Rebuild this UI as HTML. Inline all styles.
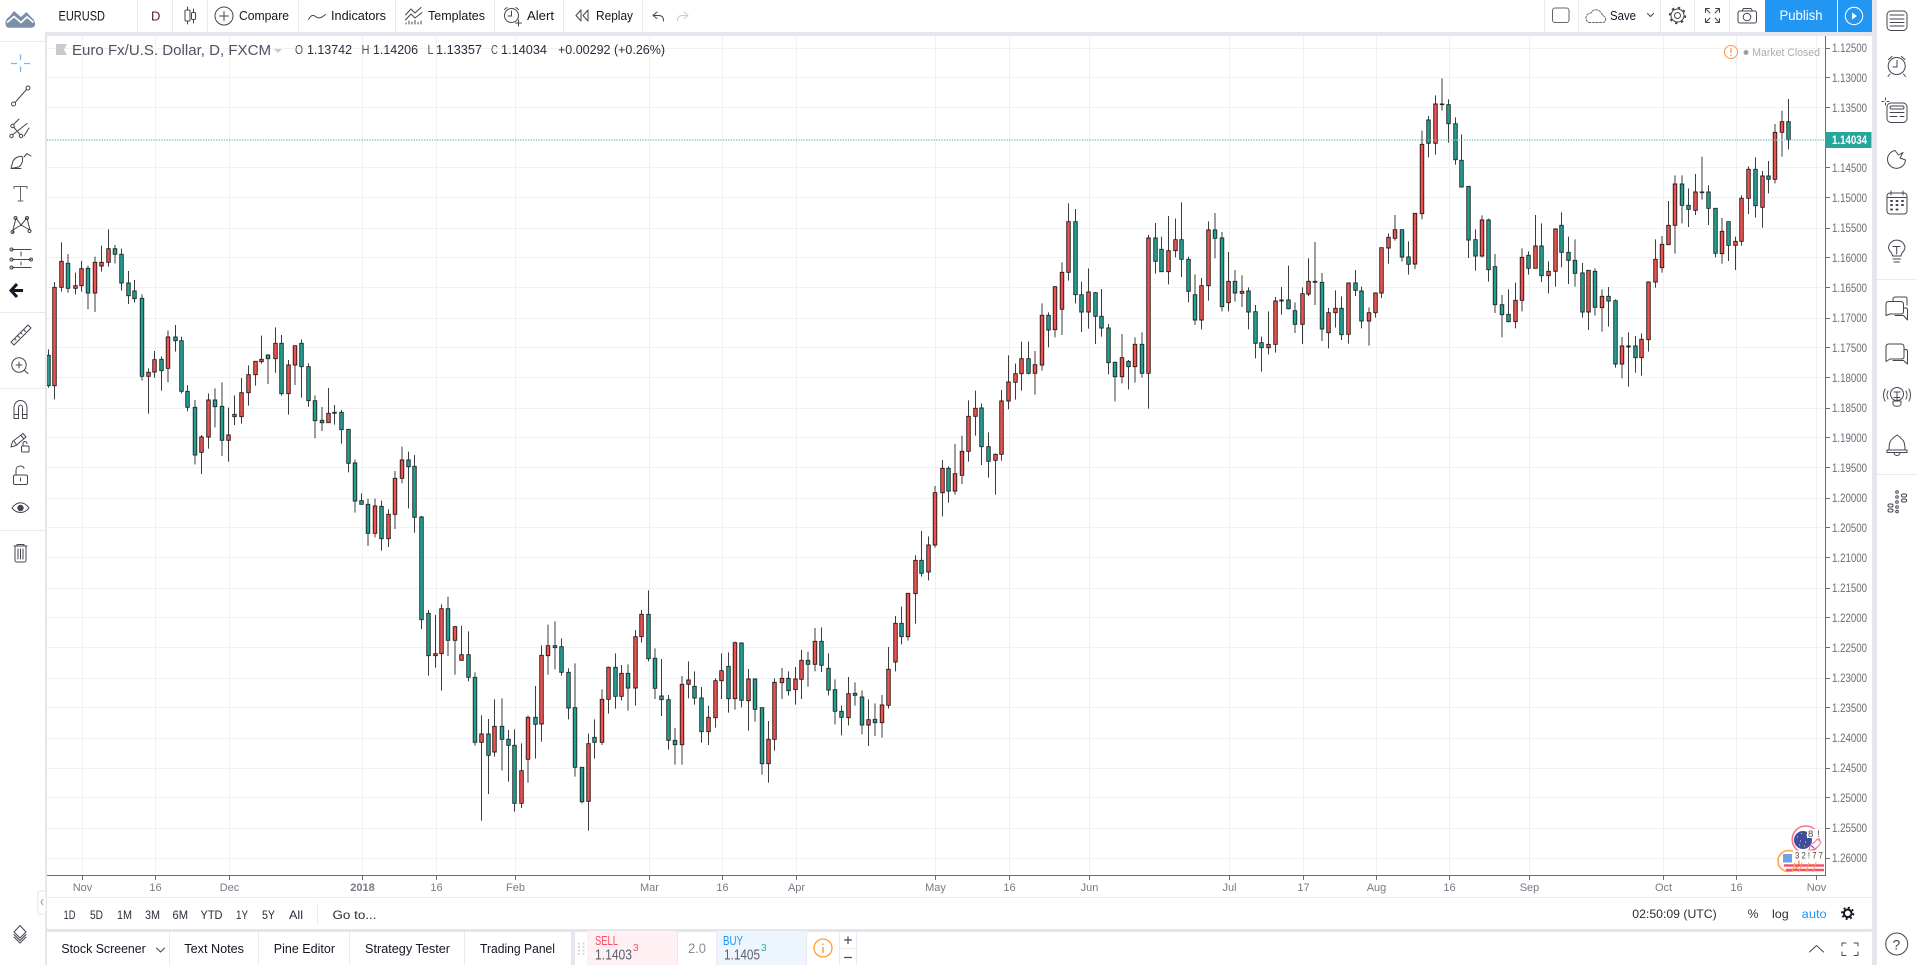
<!DOCTYPE html>
<html><head><meta charset="utf-8"><title>EURUSD</title>
<style>
html,body{margin:0;padding:0;background:#e3e6ec;overflow:hidden}
svg{display:block;position:absolute;left:0;top:0}
text{font-family:"Liberation Sans",sans-serif;fill:#131722}
.t{font-size:13px}
.p{font-size:11.5px;fill:#6a6d78}
.x{font-size:11px;fill:#787b86;text-anchor:middle}
.l{font-size:12.5px;fill:#50535e}
.r{font-size:12px;fill:#2a2e39}
.i{fill:none;stroke:#434651;stroke-width:1;stroke-linecap:round;stroke-linejoin:round}
</style></head><body>
<svg id="s" width="1917" height="965" viewBox="0 0 1917 965" xmlns="http://www.w3.org/2000/svg">
<defs><clipPath id="cc"><rect x="47" y="36" width="1778" height="839"/></clipPath><clipPath id="fc"><rect x="1760" y="820" width="64" height="55"/></clipPath></defs>
<rect width="1917" height="965" fill="#e3e6ec"/>
<!-- panels -->
<rect x="0" y="0" width="45" height="965" fill="#fff"/>
<rect x="1877" y="0" width="40" height="965" fill="#fff"/>
<rect x="0" y="0" width="1872" height="32" fill="#fff"/>
<rect x="45" y="0" width="2" height="32" fill="#fff"/>
<rect x="47" y="36" width="1825" height="893" rx="2" fill="#fff"/>
<rect x="47" y="932" width="1825" height="33" fill="#fff"/>
<!-- toolbar separators -->
<path d="M137.5 0V32M172.5 0V32M207.5 0V32M298.5 0V32M395.5 0V32M494.5 0V32M563.5 0V32M642.5 0V32M1544.5 0V32M1578.5 0V32M1660.5 0V32M1694.5 0V32M1729.5 0V32" stroke="#e8eaee"/>
<path d="M0 41.5H45M0 312.5H45M0 388.5H45M0 530.5H45M1877 279.5H1917M1877 474.5H1917" stroke="#e8eaee"/>
<!-- grid -->
<path stroke="#eff1f4" fill="none" d="M47 48.5H1825M47 77.5H1825M47 107.5H1825M47 167.5H1825M47 197.5H1825M47 228.5H1825M47 257.5H1825M47 287.5H1825M47 318.5H1825M47 347.5H1825M47 377.5H1825M47 408.5H1825M47 437.5H1825M47 467.5H1825M47 498.5H1825M47 527.5H1825M47 557.5H1825M47 588.5H1825M47 617.5H1825M47 647.5H1825M47 678.5H1825M47 707.5H1825M47 738.5H1825M47 768.5H1825M47 797.5H1825M47 828.5H1825M47 858.5H1825"/>
<path stroke="#eff1f4" fill="none" d="M82.5 36V875M155.5 36V875M229.5 36V875M362.5 36V875M436.5 36V875M515.5 36V875M649.5 36V875M722.5 36V875M796.5 36V875M935.5 36V875M1009.5 36V875M1089.5 36V875M1229.5 36V875M1303.5 36V875M1376.5 36V875M1449.5 36V875M1529.5 36V875M1663.5 36V875M1736.5 36V875M1816.5 36V875"/>
<g id="candles" clip-path="url(#cc)"></g>
<path d="M47 140H1825" stroke="#62c6ba" stroke-width="1.3" stroke-dasharray="1.300 1.300"/>
<!-- axes -->
<path d="M1825.5 36V875.5M47 875.5H1826" stroke="#6a6d78" fill="none"/>
<path stroke="#6a6d78" fill="none" d="M1826 48.5h4M1826 77.5h4M1826 107.5h4M1826 167.5h4M1826 197.5h4M1826 228.5h4M1826 257.5h4M1826 287.5h4M1826 318.5h4M1826 347.5h4M1826 377.5h4M1826 408.5h4M1826 437.5h4M1826 467.5h4M1826 498.5h4M1826 527.5h4M1826 557.5h4M1826 588.5h4M1826 617.5h4M1826 647.5h4M1826 678.5h4M1826 707.5h4M1826 738.5h4M1826 768.5h4M1826 797.5h4M1826 828.5h4M1826 858.5h4"/>
<path stroke="#6a6d78" fill="none" d="M82.5 876v4M155.5 876v4M229.5 876v4M362.5 876v4M436.5 876v4M515.5 876v4M649.5 876v4M722.5 876v4M796.5 876v4M935.5 876v4M1009.5 876v4M1089.5 876v4M1229.5 876v4M1303.5 876v4M1376.5 876v4M1449.5 876v4M1529.5 876v4M1663.5 876v4M1736.5 876v4M1816.5 876v4"/>
<path d="M47 897.5H1872" stroke="#e8eaee"/>
<!-- price labels -->
<g class="pl">
<text class="p" x="1832" y="52" textLength="35">1.12500</text>
<text class="p" x="1832" y="82" textLength="35">1.13000</text>
<text class="p" x="1832" y="112" textLength="35">1.13500</text>
<text class="p" x="1832" y="172" textLength="35">1.14500</text>
<text class="p" x="1832" y="202" textLength="35">1.15000</text>
<text class="p" x="1832" y="232" textLength="35">1.15500</text>
<text class="p" x="1832" y="262" textLength="35">1.16000</text>
<text class="p" x="1832" y="292" textLength="35">1.16500</text>
<text class="p" x="1832" y="322" textLength="35">1.17000</text>
<text class="p" x="1832" y="352" textLength="35">1.17500</text>
<text class="p" x="1832" y="382" textLength="35">1.18000</text>
<text class="p" x="1832" y="412" textLength="35">1.18500</text>
<text class="p" x="1832" y="442" textLength="35">1.19000</text>
<text class="p" x="1832" y="472" textLength="35">1.19500</text>
<text class="p" x="1832" y="502" textLength="35">1.20000</text>
<text class="p" x="1832" y="532" textLength="35">1.20500</text>
<text class="p" x="1832" y="562" textLength="35">1.21000</text>
<text class="p" x="1832" y="592" textLength="35">1.21500</text>
<text class="p" x="1832" y="622" textLength="35">1.22000</text>
<text class="p" x="1832" y="652" textLength="35">1.22500</text>
<text class="p" x="1832" y="682" textLength="35">1.23000</text>
<text class="p" x="1832" y="712" textLength="35">1.23500</text>
<text class="p" x="1832" y="742" textLength="35">1.24000</text>
<text class="p" x="1832" y="772" textLength="35">1.24500</text>
<text class="p" x="1832" y="802" textLength="35">1.25000</text>
<text class="p" x="1832" y="832" textLength="35">1.25500</text>
<text class="p" x="1832" y="862" textLength="35">1.26000</text>
</g>
<rect x="1825" y="132" width="46.5" height="16" fill="#26a69a"/>
<text x="1832" y="144" textLength="35" style="font-size:11.5px;font-weight:bold;fill:#fff">1.14034</text>
<!-- time labels -->
<text class="x" x="82.5" y="891">Nov</text><text class="x" x="155.5" y="891">16</text><text class="x" x="229.5" y="891">Dec</text><text class="x" x="362.5" y="891" style="font-weight:bold">2018</text><text class="x" x="436.5" y="891">16</text><text class="x" x="515.5" y="891">Feb</text><text class="x" x="649.5" y="891">Mar</text><text class="x" x="722.5" y="891">16</text><text class="x" x="796.5" y="891">Apr</text><text class="x" x="935.5" y="891">May</text><text class="x" x="1009.5" y="891">16</text><text class="x" x="1089.5" y="891">Jun</text><text class="x" x="1229.5" y="891">Jul</text><text class="x" x="1303.5" y="891">17</text><text class="x" x="1376.5" y="891">Aug</text><text class="x" x="1449.5" y="891">16</text><text class="x" x="1529.5" y="891">Sep</text><text class="x" x="1663.5" y="891">Oct</text><text class="x" x="1736.5" y="891">16</text><text class="x" x="1816.5" y="891">Nov</text>
<!-- top toolbar text -->
<text class="t" x="58.5" y="20.500" textLength="46.5" style="font-size:13.500px">EURUSD</text>
<text class="t" x="151" y="20.500" style="font-size:13px;fill:#5b1a3c">D</text>
<text class="t" x="239" y="20" textLength="50">Compare</text>
<text class="t" x="331" y="20" textLength="55">Indicators</text>
<text class="t" x="428" y="20" textLength="57">Templates</text>
<text class="t" x="527" y="20" textLength="27">Alert</text>
<text class="t" x="596" y="20" textLength="37">Replay</text>
<text class="t" x="1610" y="20" textLength="26">Save</text>
<rect x="1765" y="0" width="107" height="32" fill="#2196f3"/>
<path d="M1837.5 0V32" stroke="#fff"/>
<text x="1779.5" y="20" textLength="43" style="font-size:14px;fill:#fff">Publish</text>
<circle cx="1854" cy="16" r="8.7" fill="none" stroke="#fff" stroke-width="1.1"/><path d="M1852 12.5l5 3.5-5 3.5z" fill="#fff"/>
<!-- top toolbar icons -->
<g class="i">
<path d="M187.5 7V24M193.5 9V23"/><rect x="185" y="10" width="5" height="11" rx="1" fill="#fff"/><rect x="191.5" y="12.5" width="4" height="7" rx="1" fill="#fff"/>
<circle cx="224" cy="16" r="9"/><path d="M224 11.5V20.5M219.5 16H228.5"/>
<path d="M308.5 19.5C311 15 313 14.5 315.5 16.5S320 19 325.5 14.5"/>
<path d="M405.5 15L411 9L415 13L421 7.5M405.5 20L411 14L415 18L422 12.5M406 24v-1M409 24v-3M412 24v-2M415 24v-3.500M418 24v-1.500M421 24v-3"/>
<circle cx="511.500" cy="15.500" r="7"/><path d="M511.500 11V16H508M504.500 9.500L507 7.500M516 7.500L518.500 9.500M518.500 20V26M515.500 23H521.500"/>
<path d="M581 10L576 15.500L581 21ZM588 10L583 15.500L588 21Z"/>
<path d="M657 12L653 15.500L657 18.500M653 15.500H659C662 15.500 663.500 17.500 663.500 21"/>
<path d="M684 12L688 15.500L684 18.500M688 15.500H682C679 15.500 677.500 17.500 677.500 21" stroke="#c9cbd1"/>
<rect x="1552.500" y="8" width="16.500" height="14.500" rx="2.500" stroke="#666"/>
<path d="M1589 22.500H1603C1606.500 22.500 1606.500 16 1602.500 15.500C1601 10 1594 7 1591 13C1586 13 1583.500 20 1589 22.500Z" stroke-dasharray="2 1.500" stroke="#666"/>
<path d="M1647.500 13.500L1650.500 16.500L1653.500 13.500"/>
<circle cx="1677.500" cy="15.500" r="3"/><circle cx="1677.500" cy="15.500" r="6.500"/><circle cx="1677.500" cy="15.500" r="7.800" stroke-width="1.800" stroke-dasharray="2.400 3.720" stroke-linecap="butt"/>
<path d="M1705.500 12.500V8.500H1709.500M1715.500 8.500H1719.500V12.500M1719.500 18.500V22.500H1715.500M1709.500 22.500H1705.500V18.500M1706 9L1710 13M1719 9L1715 13M1719 22L1715 18M1706 22L1710 18"/>
<rect x="1738" y="11" width="18.500" height="12" rx="2"/><path d="M1742 11L1743.500 8.500H1751L1752.500 11"/><circle cx="1747" cy="17" r="3.800"/>
</g>
<!-- legend -->
<path d="M56 44H67L64 49.500L67 55H56Z" fill="#c5cbce"/>
<text x="72" y="55" textLength="199" style="font-size:14.500px;fill:#50535e">Euro Fx/U.S. Dollar, D, FXCM</text>
<path d="M274 49H282L278 53Z" fill="#c5cbce"/>
<text class="l" x="295" y="54" textLength="8">O</text><text class="l" x="307" y="54" textLength="45" style="fill:#2a2e39">1.13742</text>
<text class="l" x="361.500" y="54" textLength="8">H</text><text class="l" x="373" y="54" textLength="45" style="fill:#2a2e39">1.14206</text>
<text class="l" x="427.500" y="54" textLength="6">L</text><text class="l" x="436" y="54" textLength="46" style="fill:#2a2e39">1.13357</text>
<text class="l" x="491" y="54" textLength="7">C</text><text class="l" x="501" y="54" textLength="46" style="fill:#2a2e39">1.14034</text>
<text class="l" x="558" y="54" textLength="107" style="fill:#2a2e39">+0.00292 (+0.26%)</text>
<circle cx="1731" cy="52" r="6.500" fill="#fff" stroke="#ff9850" stroke-width="1.100"/><path d="M1731 48V53M1731 54.500V56" stroke="#ff9850" stroke-width="1.300"/>
<circle cx="1746" cy="52.500" r="2.500" fill="#9a9da5"/>
<text x="1752.300" y="56" textLength="67.700" style="font-size:11px;fill:#a8abb2">Market Closed</text>
<!-- flags -->
<g clip-path="url(#fc)">
<circle cx="1805.700" cy="839.500" r="13.500" fill="#fff" stroke="#ff7089" stroke-width="1.600"/>
<circle cx="1803" cy="840" r="9" fill="#3e4d9e"/>
<path d="M1797 837h1M1801 833.500h1M1806 835h1M1800 841h1M1805 842h1M1799 845h1M1804 846h1" stroke="#d8c44a" stroke-width="1.200"/>
<path d="M1811 844a9 9 0 0 0 6-5l4 3a13 13 0 0 1-12 8z" fill="#fff" stroke="#ff7089"/>
<path d="M1811 845.500L1814 848" stroke="#3e4d9e"/>
<rect x="1807" y="829" width="19" height="9" fill="#fff"/>
<circle cx="1788.500" cy="861" r="10.500" fill="#fff" stroke="#ffa63f" stroke-width="1.600"/>
<rect x="1783" y="854" width="9" height="8.500" fill="#6fa2e4"/>
<path d="M1784 865.500H1824M1786 870H1824" stroke="#f4536e" stroke-width="2.500"/>
<path d="M1795 862.500L1792 872M1802 862.500L1799 872M1809 862.500L1806 872M1816 862.500L1813 872" stroke="#ffa63f" fill="none"/>
<rect x="1793" y="850.500" width="32" height="10" fill="#fff"/>
<text x="1808" y="837" style="font-size:9.500px;fill:#444">8</text><text x="1817" y="837" style="font-size:9.500px;fill:#444">!</text>
<text x="1795" y="858.500" textLength="28" style="font-size:9.500px;fill:#444">3 2 ! 7 7</text>
</g>
<!-- range bar -->
<g class="r">
<text class="r" x="63.500" y="919" textLength="12">1D</text>
<text class="r" x="90" y="919" textLength="13">5D</text>
<text class="r" x="117" y="919" textLength="15">1M</text>
<text class="r" x="145" y="919" textLength="15">3M</text>
<text class="r" x="172.500" y="919" textLength="15.500">6M</text>
<text class="r" x="200.500" y="919" textLength="22">YTD</text>
<text class="r" x="236" y="919" textLength="12">1Y</text>
<text class="r" x="262" y="919" textLength="13">5Y</text>
<text class="r" x="289" y="919" textLength="14">All</text>
<text class="r" x="332.500" y="919" textLength="44">Go to...</text>
</g>
<path d="M317.500 903V925" stroke="#e8eaee"/>
<text class="r" x="1632.300" y="918" textLength="84.400">02:50:09 (UTC)</text>
<text class="r" x="1747.700" y="918" textLength="10.600">%</text>
<text class="r" x="1772" y="918" textLength="16.700">log</text>
<text class="r" x="1801.700" y="918" textLength="25" style="fill:#2196f3">auto</text>
<circle cx="1847.700" cy="913.300" r="3.800" fill="none" stroke="#131722" stroke-width="2"/><circle cx="1847.700" cy="913.300" r="5.700" fill="none" stroke="#131722" stroke-width="1.800" stroke-dasharray="2 2.470"/>
<path d="M38 914V893a2 2 0 0 1 2-2H46V914Z" fill="#fff" stroke="#e3e6ec"/><path d="M43 899L41 902L43 905" fill="none" stroke="#9598a1"/>
<!-- bottom tabs -->
<text class="t" x="61.400" y="953" textLength="84.400" style="font-size:12.500px">Stock Screener</text>
<path d="M156.500 948L160.500 952L164.500 948" class="i"/>
<text class="t" x="184.300" y="953" textLength="59.700" style="font-size:12.500px">Text Notes</text>
<text class="t" x="273.800" y="953" textLength="61.200" style="font-size:12.500px">Pine Editor</text>
<text class="t" x="365" y="953" textLength="85" style="font-size:12.500px">Strategy Tester</text>
<text class="t" x="480" y="953" textLength="75" style="font-size:12.500px">Trading Panel</text>
<path d="M169.500 932V965M258.500 932V965M349.500 932V965M464.500 932V965" stroke="#e8eaee"/>
<rect x="571" y="932" width="4" height="33" fill="#e3e6ec"/>
<rect x="587" y="931" width="90.500" height="34" fill="#fff0f3"/>
<rect x="716.500" y="931" width="90" height="34" fill="#edf6ff"/>
<path d="M677.500 931V965M716.500 931V965M806.500 931V965M839.500 931V965M856.500 931V965M840 948.500H856" stroke="#e8eaee"/>
<path d="M578 943.500h2M582.500 943.500h2M578 947h2M582.500 947h2M578 950.500h2M582.500 950.500h2M578 954h2M582.500 954h2" stroke="#d5d8de" stroke-width="2"/>
<text x="595" y="945" textLength="23" style="font-size:12.500px;fill:#ff4a68">SELL</text>
<text x="595" y="959.500" textLength="37" style="font-size:14.500px;fill:#5d606b">1.1403</text>
<text x="633" y="951" style="font-size:10px;fill:#ff4a68">3</text>
<text x="688" y="953" textLength="18" style="font-size:14px;fill:#8a8d96">2.0</text>
<text x="723" y="945" textLength="20" style="font-size:12.500px;fill:#2196f3">BUY</text>
<text x="724" y="959.500" textLength="36" style="font-size:14.500px;fill:#5d606b">1.1405</text>
<text x="761" y="951" style="font-size:10px;fill:#1fb58f">3</text>
<circle cx="823" cy="948" r="9" fill="none" stroke="#ff9d2e" stroke-width="1.300"/><path d="M823 947V953M823 943.500V945" stroke="#ff9d2e" stroke-width="1.500"/>
<path d="M848 936.500V944M844.200 940H851.800M844.200 957.500H851.800" stroke="#434651" stroke-width="1.200"/>
<path d="M1809.500 952L1816.500 945.500L1823.500 952" class="i" stroke-width="1"/>
<path d="M1842 946V943H1846M1854 943H1858V946M1858 952V955.500H1854M1846 955.500H1842V952" class="i"/>
<!-- left toolbar icons -->
<path d="M5.500 24C5 20 8 17.500 10 16L14 11L21 17L26.500 12L31 17C34 19 35.500 22.500 35 25C34.500 27 33 27.700 31 27.700H9C7 27.700 6 26.500 5.500 24Z" fill="#7a90a8"/>
<path d="M7 22.500L14 16.500L21 22.500L27 17L33.500 22.500" fill="none" stroke="#fff" stroke-width="1.600"/>
<path d="M20.500 54.500V60M20.500 66.500V72M11 63.500H17M24 63.500H30" stroke="#74b8f5" stroke-width="1.300"/>
<g class="i">
<circle cx="13.500" cy="104" r="2"/><circle cx="28" cy="88" r="2"/><path d="M15 102.500L26.500 89.500"/>
<circle cx="12.500" cy="126" r="1.700"/><circle cx="11.500" cy="136" r="1.700"/><circle cx="21" cy="136" r="1.700"/><path d="M19 119L13.500 124.500M14 127.500L20 134.500M13 134.500L27 123.500M29 128L24 136"/>
<path d="M11 168.500L13 161C15 157.500 19 156 22 156.500C23.500 160 22 165 18.500 167L11 168.500M11 168.500H21M24 157L27 153.500L31 156"/>
<path d="M14 186.500H27M20.500 186.500V201M18 201H23M14 186.500V188.500M27 186.500V188.500" stroke="#666"/>
<path d="M16 218L13 230M16 218L21 225L27 218M27 218L30 230M13 230L21 225L30 230M13 230V233" /><circle cx="15.500" cy="218" r="1.500"/><circle cx="27" cy="218" r="1.500"/><circle cx="12.500" cy="232" r="1.500"/><circle cx="29.500" cy="231" r="1.500"/>
<path d="M12 249.500H31"/><circle cx="11.500" cy="249.500" r="1.500"/><path d="M12 259.500H31M12 267.500H31M21 252V256M21 262V265"/><circle cx="11.500" cy="259.500" r="1.500"/><circle cx="31" cy="259.500" r="1.500"/><circle cx="11.500" cy="267.500" r="1.500"/>
<path d="M11 342L28 325L31 328L14 345ZM14.500 338.500L16 340M17.500 335.500L19.500 337.500M20.500 332.500L22 334M23.500 329.500L25.500 331.500"/>
<circle cx="19" cy="365" r="7.200"/><path d="M19 362V368M16 365H22M24.500 370.500L28 373.500"/>
<path d="M14 418.500V408C14 398 27 398 27 408V418.500H22.500V408C22.500 404 18.500 404 18.500 408V418.500ZM14 414.500H18.500M22.500 414.500H27"/>
<path d="M11 447L12.500 441.500L23 433.500L26 437L16 445.500ZM14 441L16.500 445M21 435.500L23.500 438.500"/><path d="M23 446V443.500C23 441 27 441 27 443.500"/><rect x="21.500" y="446" width="7.500" height="6" rx="1" fill="#fff"/>
<rect x="13.500" y="475" width="14" height="9.500" rx="1.500"/><path d="M16 475V470C16 465 24 465 24 468.500M20.500 478V481"/>
<path d="M12 508C17 501 24 501 29 508C24 514 17 514 12 508Z"/><circle cx="20.500" cy="508" r="2.700" fill="#434651"/>
<path d="M14 546H27M15 546V560C15 562 16 562 17 562H24C25 562 26 562 26 560V546M18 549V559M20.500 549V559M23 549V559M17 546V544.500H24V546"/>
<path d="M20 925.500L26 932L20 938L14 932ZM14 934.500L20 940.500L26 934.500M14 937L20 943L26 937"/>
</g>
<path d="M11 290.500H23M17 284L11 290.500L17 297" fill="none" stroke="#131722" stroke-width="3"/>
<!-- right toolbar icons -->
<g class="i">
<rect x="1887" y="11" width="20" height="19.500" rx="4"/><path d="M1890 15H1904M1890 19H1904M1890 22.500H1904M1890 26H1904"/>
<circle cx="1896.700" cy="66" r="8.500"/><path d="M1897 60.500V67H1893M1888.500 59.500L1892 56.500M1905 59.500L1901.500 56.500M1890 74L1888 76.500M1903.500 74L1905.500 76.500"/>
<rect x="1887" y="103" width="20" height="19.500" rx="4"/><rect x="1890" y="106" width="14" height="3" rx="1.500"/><path d="M1890 112.500H1904M1890 116.500H1897M1900 116.500H1904M1882 101.500H1884M1887 101.500H1889M1885.500 98V100M1885.500 103V105"/>
<path d="M1895 150.500A9 9 0 1 0 1905.500 160L1900 158L1903 152.500L1898.500 155Z"/>
<rect x="1887" y="193" width="20" height="21" rx="3"/><path d="M1887 197.500H1907M1891 191V195M1903 191V195"/><path d="M1891 201h1M1896.500 201h1M1902 201h1M1891 205h1M1896.500 205h1M1902 205h1M1891 209.500h1M1896.500 209.500h1" stroke-width="2"/>
<path d="M1892.500 256C1892.500 252 1888.500 251.500 1888.500 247.500A8.300 8.300 0 0 1 1905 247.500C1905 251.500 1901 252 1901 256ZM1893 259H1900.500M1894 262H1899.500M1893 246.500H1900M1896.700 247V254"/>
<path d="M1886 315.500V304C1886 302.500 1887 301.500 1888.500 301.500H1901C1902.500 301.500 1903.500 302.500 1903.500 304V312C1903.500 313 1902.500 314 1901 314H1890ZM1893 301.500V299C1893 298 1894 297 1895 297H1905.500C1906.500 297 1907 298 1907 299V305M1903.500 308H1906C1907 308 1907.500 309 1907.500 310V320L1903.500 315.500H1895"/>
<path d="M1886 361.500V347C1886 345 1887 344 1889 344H1901C1903 344 1904 345 1904 347V357C1904 358 1903 359 1901 359H1890ZM1904 349.500H1906C1907 349.500 1907.500 350.500 1907.500 351.500V364L1903.500 360.500H1893"/>
<circle cx="1897" cy="394" r="6.500"/><path d="M1893 401H1901V404C1901 407 1893 407 1893 404ZM1894 397.500H1900M1897 392V401M1894 392H1900"/>
<path d="M1885 389C1883 393 1883 397 1885 401M1888 391C1886.500 394 1886.500 396 1888 399M1909 389C1911 393 1911 397 1909 401M1906 391C1907.500 394 1907.500 396 1906 399"/>
<path d="M1889 450C1889 443 1889.500 440 1897 435C1904.500 440 1905 443 1905 450M1887 450H1907V452.500H1887ZM1894 452.500C1894 456.500 1900 456.500 1900 452.500"/>
<circle cx="1897" cy="492" r="1.300"/><circle cx="1897" cy="497" r="1.300"/><circle cx="1897" cy="502" r="1.300"/><circle cx="1897" cy="507" r="1.300"/><circle cx="1897" cy="511.500" r="1.300"/>
<rect x="1901.500" y="494" width="5" height="3" rx="1.500"/><rect x="1901.500" y="499" width="5" height="3" rx="1.500"/><rect x="1888" y="504" width="5" height="3" rx="1.500"/><rect x="1888" y="509" width="5" height="3" rx="1.500"/>
<circle cx="1896.700" cy="944" r="11"/>
</g>
<text x="1892.500" y="949.500" style="font-size:14px;fill:#434651">?</text>
</svg>
<script>
document.querySelectorAll("text[textLength]").forEach(function(t){t.setAttribute("lengthAdjust","spacingAndGlyphs")});
var S=[
[40,200,"26 448 466 557 563 g,44 246 262 557 598 r,65 127 184 262 275 r,84 162 190 265 278 g,106 218 257 265 283 r,125 183 206 257 275 r,144 197 205 279 328 g,165 170 187 279 336 r,184 137 187 198 215 r,205 88 146 187 200 r,225 135 146 163 190 g,244 146 163 249 272 g,265 213 249 287 312 g,284 240 273 296 307 g,306 283 295 529 542 g,325 505 517 529 641 r,344 453 479 516 533 r,365 469 478 512 572 g,384 391 411 505 547 r,406 375 411 422 455 g,425 410 422 574 580 g,443 556 574 622 634 g,465 600 622 765 793 g,485 705 711 757 822 r,505 580 600 711 746 r,525 565 600 620 682 g,546 547 619 721 768 g,565 623 705 721 785 r,584 586 643 650 675 g,605 534 578 650 671 r,625 496 524 578 617 r,646 484 484 524 557 r,665 407 478 485 491 r,684 463 465 476 552 g,706 382 430 476 518 r,725 405 430 581 587 g,746 480 495 581 644 r,765 437 437 495 555 r,785 418 430 500 593 g,805 490 500 602 620 g,825 586 602 662 715 g,846 621 661 668 693 g,865 564 640 668 668 r,883 615 637 640 674 g,905 630 637 689 731 g,925 688 688 790 817 g"],
[0,300,"1065 478 489 603 638 g,1085 580 602 613 613 g,1104 596 613 700 738 g,1125 596 618 700 712 r,1144 602 619 716 752 g,1165 628 643 716 741 r,1185 513 535 643 687 r"],
[400,450,"6 -10 30 85 100 r,25 5 30 50 175 g,44 15 49 202 248 g,65 198 201 509 537 g,85 480 490 617 677 g,106 495 611 617 653 r,125 463 476 611 722 r,144 440 476 571 618 g,165 528 530 571 674 r,184 527 614 631 631 r,206 544 614 682 694 g,225 667 682 877 887 g,244 796 852 877 1112 r,265 807 852 916 1032 g,284 748 829 906 920 r,306 745 829 868 961 g,325 840 868 886 995 g,344 838 886 1060 1085 g,365 880 962 1060 1074 r,384 797 802 928 998 r,406 708 802 823 926 g,425 586 616 822 875 r,444 524 587 617 674 r,465 514 587 593 658 g,485 565 590 667 677 g,506 655 667 774 808 g,525 640 773 952 980 g,546 952 952 1055 1060 g,565 851 881 1054 1142 r,584 808 862 877 926 g,606 718 748 877 885 r,625 650 652 748 791 r,646 610 652 739 776 g,665 645 670 739 751 r,684 643 670 714 782 g,706 540 560 714 767 r,725 480 493 560 578 r,746 421 493 626 634 g,765 595 625 715 747 g,785 627 738 749 798 g,805 735 749 871 899 g,825 834 871 884 944 g,846 678 703 884 944 r,865 634 690 703 745 r,884 664 709 744 764 g,905 711 744 845 878 g,925 767 802 845 885 r,946 685 692 803 833 r,965 610 662 692 747 r,985 607 649 746 788 g,1005 575 578 746 779 r,1024 577 579 751 772 g,1045 657 687 752 842 r,1065 685 687 778 815 g,1086 773 773 941 974 g,1105 813 868 941 998 r,1124 685 697 868 902 r,1146 654 685 698 747 r,1165 664 685 722 737 g,1186 651 687 719 764 r,1205 600 631 688 747 r,1224 605 631 643 710 g,1245 534 574 643 664 r,1264 532 574 646 666 g,1286 610 655 720 736 g,1305 688 719 784 823 g,1325 767 784 802 856 g,1346 681 731 803 826 r,1365 697 730 736 767 g,1386 721 741 825 853 g,1405 748 809 825 888 r,1425 760 808 818 858 g,1446 735 765 818 863 r,1465 591 658 766 776 r,1486 498 520 636 664 r"],
[900,350,"5 770 820 860 883 g,24 730 730 860 872 r,46 616 631 731 821 r,65 543 631 670 680 g,86 559 585 666 691 r,105 408 428 585 593 r,127 330 355 428 499 r,146 349 355 423 458 g,165 282 371 423 434 r,186 257 304 376 402 r,205 151 199 304 335 r,226 122 175 199 257 r,245 160 174 290 345 g,265 247 290 334 383 g,286 310 313 331 434 r,305 120 153 313 332 r,326 16 96 153 178 r,346 41 71 97 149 r,365 -25 26 71 122 r,385 -25 26 70 73 g,405 3 44 70 134 r"],
[1030,180,"36 370 406 555 572 r,55 397 406 450 502 g,75 318 320 449 472 r,96 247 277 388 465 r,115 70 125 277 302 r,136 87 125 344 370 g,155 305 344 396 456 g,175 265 336 396 446 r,196 336 338 409 492 g,214 327 409 444 470 g,236 432 444 548 583 g,255 545 547 590 664 g,276 462 533 590 610 r,295 540 544 560 628 g,315 472 493 560 608 r,336 457 493 580 593 g,355 165 174 580 686 r,376 129 174 244 281 g,395 170 208 275 275 g,415 108 212 275 313 r,436 116 179 212 232 r,455 67 179 238 291 g,476 230 238 334 367 g,495 283 344 420 435 g,515 294 317 420 448 r,536 124 150 317 362 r,555 99 150 175 235 g,576 156 174 380 394 g,595 216 304 368 394 r,615 270 304 339 365 g,636 286 334 340 381 r,655 322 333 396 448 g,676 375 395 490 535 g,695 470 488 503 575 g,715 394 493 503 523 r,736 351 363 493 518 r,755 321 360 363 404 g,776 257 360 386 388 g,795 367 392 433 459 g,817 322 341 433 492 r,836 235 304 342 348 r,855 186 304 307 375 g,876 279 307 447 483 g,895 384 398 458 505 r,916 331 385 398 443 r,935 349 385 464 480 g,955 307 309 463 491 r,976 270 309 331 348 g,995 320 333 423 445 g,1017 382 398 423 497 r,1036 337 339 398 413 r,1055 202 203 339 354 r,1076 160 172 204 251 r,1095 105 149 175 182 r,1116 148 149 231 245 g,1135 184 231 253 284 g,1155 100 100 252 267 r"],
[1400,80,"66 152 193 401 418 r,85 108 120 190 232 g,106 46 72 190 224 r,126 -5 72 74 92 g,145 58 74 131 188 g,166 112 131 239 254 g,185 163 241 321 322 g,206 318 319 480 534 g,226 448 479 528 572 g,246 406 420 528 532 r,266 416 420 569 605 g,285 522 560 674 699 g,306 645 674 704 772 g,325 628 703 725 727 g,346 608 661 725 745 r,366 505 532 661 694 r,385 514 526 565 584 g,406 405 498 565 566 r,425 430 498 587 606 g,446 544 574 587 640 r,466 445 447 574 620 r,485 397 436 517 562 g,506 470 517 541 612 g,525 478 541 580 620 g,547 549 579 696 713 g,566 571 571 696 750 r,585 565 574 682 707 g,606 628 649 683 755 r,625 621 649 663 740 g,646 658 662 852 863 g,666 771 798 852 895 r,685 757 798 801 920 g,706 768 798 833 878 g,725 760 778 833 887 r,746 604 606 779 815 r,766 478 538 606 623 r,786 468 493 563 578 r,806 363 436 494 495 r,825 286 312 436 521 r,846 286 312 376 430 g,865 325 376 388 441 g,886 282 336 391 405 r,906 230 336 338 359 g,925 316 336 385 435 g,946 385 385 520 532 g,966 414 454 521 551 r,986 424 425 496 543 g,1006 470 484 496 570 r,1025 346 355 484 497 r,1046 259 268 355 402 r,1066 232 268 377 413 g,1087 273 288 382 443 r,1106 243 288 298 340 g,1125 132 157 298 310 r,1146 92 125 157 230 r,1165 57 125 179 208 g"]
];
var ns="http://www.w3.org/2000/svg",G=document.getElementById("candles"),w="",r="",g="",f=function(n){return n.toFixed(2)};
S.forEach(function(s){s[2].split(",").forEach(function(c){
var a=c.split(" "),x=Math.round((s[0]+a[0]/3)*2)/2,
hi=s[1]+a[1]/3,t=s[1]+a[2]/3,b=s[1]+a[3]/3,lo=s[1]+a[4]/3;
w+="M"+x+" "+f(hi)+"V"+f(lo);
if(b-t<.6){b=t+.6}
var d="M"+(x-1.75)+" "+f(t)+"h3.5V"+f(b)+"h-3.5z";
if(a[5]=="r")r+=d;else g+=d;
})});
function add(d,fill,sw,st){var p=document.createElementNS(ns,"path");p.setAttribute("d",d);p.setAttribute("fill",fill);p.setAttribute("stroke",st);p.setAttribute("stroke-width",sw);G.appendChild(p)}
add(w,"none",".85","#1a1a1a");
add(g,"#22a193",".95","#1f2a2a");
add(r,"#ef5350",".95","#2a1a1a");
</script>
</body></html>
